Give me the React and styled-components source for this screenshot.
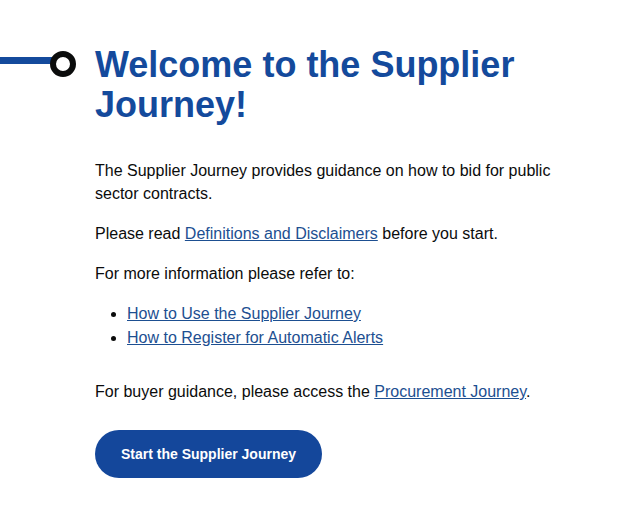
import React from "react";
import styled, { createGlobalStyle } from "styled-components";

const GlobalStyle = createGlobalStyle`
  body {
    margin: 0;
    background: #ffffff;
    font-family: "Liberation Sans", Arial, sans-serif;
    color: #0b0c0c;
  }
`;

const Page = styled.div`
  display: flex;
  align-items: flex-start;
  padding-top: 45px;
`;

const Marker = styled.div`
  display: flex;
  align-items: flex-start;
  width: 95px;
  flex-shrink: 0;
  margin-top: 6px;
`;

const Track = styled.div`
  width: 52px;
  height: 7px;
  margin-top: 6px;
  background: #144a9c;
`;

const Stop = styled.div`
  width: 14px;
  height: 14px;
  margin-left: -2px;
  border: 6px solid #0b0c0c;
  border-radius: 50%;
  background: #ffffff;
`;

const Content = styled.main`
  width: 470px;
`;

const Heading = styled.h1`
  margin: 0 0 34px;
  font-size: 36px;
  line-height: 40px;
  font-weight: 700;
  color: #144a9c;
`;

const Para = styled.p`
  margin: 0 0 17px;
  font-size: 16px;
  line-height: 23px;
`;

const TextLink = styled.a`
  color: #1d4f91;
  text-decoration: underline;
`;

const LinkList = styled.ul`
  margin: 0 0 30px;
  padding-left: 32px;
  font-size: 16px;
  line-height: 24px;
`;

const Button = styled.button`
  margin-top: 10px;
  height: 48px;
  padding: 0 26px;
  border: none;
  border-radius: 24px;
  background: #14479b;
  color: #ffffff;
  font-family: "Liberation Sans", Arial, sans-serif;
  font-size: 14px;
  font-weight: 700;
  cursor: pointer;
`;

export default function App() {
  return (
    <>
      <GlobalStyle />
      <Page>
        <Marker>
          <Track />
          <Stop />
        </Marker>
        <Content>
          <Heading>Welcome to the Supplier Journey!</Heading>
          <Para>
            The Supplier Journey provides guidance on how to bid for public
            sector contracts.
          </Para>
          <Para>
            Please read <TextLink href="#">Definitions and Disclaimers</TextLink>{" "}
            before you start.
          </Para>
          <Para>For more information please refer to:</Para>
          <LinkList>
            <li>
              <TextLink href="#">How to Use the Supplier Journey</TextLink>
            </li>
            <li>
              <TextLink href="#">How to Register for Automatic Alerts</TextLink>
            </li>
          </LinkList>
          <Para>
            For buyer guidance, please access the{" "}
            <TextLink href="#">Procurement Journey</TextLink>.
          </Para>
          <Button>Start the Supplier Journey</Button>
        </Content>
      </Page>
    </>
  );
}
